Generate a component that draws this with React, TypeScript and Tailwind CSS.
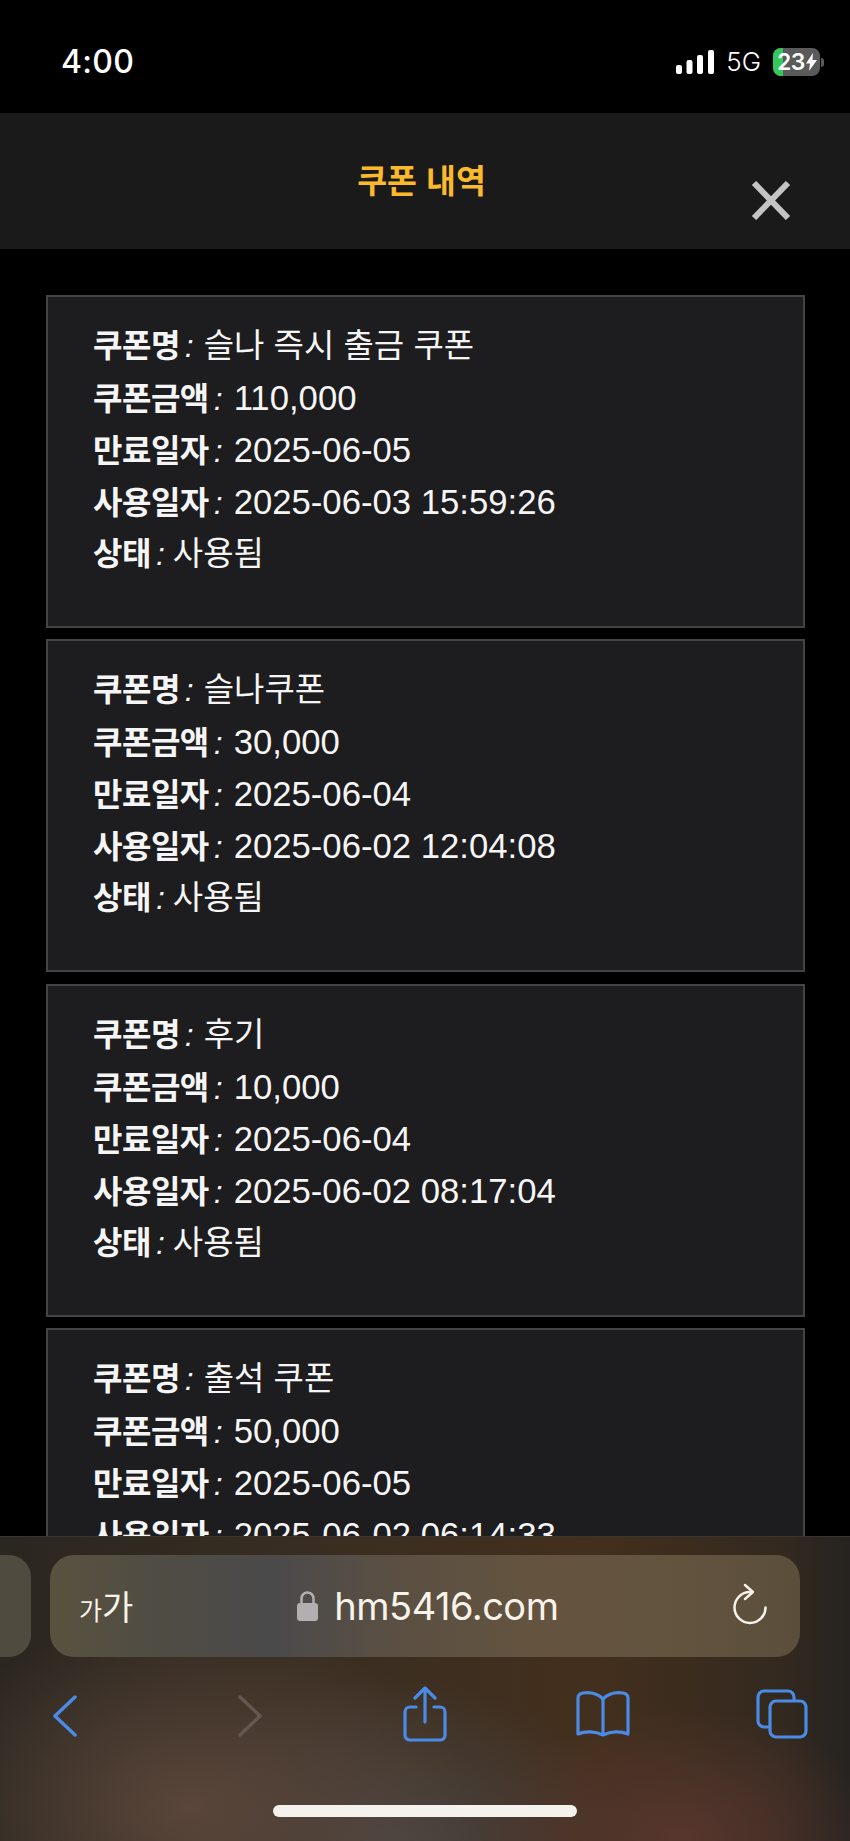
import React from 'react';

const coupons = [
  { name: '슬나 즉시 출금 쿠폰', amount: '110,000', expires: '2025-06-05', used: '2025-06-03 15:59:26' },
  { name: '슬나쿠폰', amount: '30,000', expires: '2025-06-04', used: '2025-06-02 12:04:08' },
  { name: '후기', amount: '10,000', expires: '2025-06-04', used: '2025-06-02 08:17:04' },
  { name: '출석 쿠폰', amount: '50,000', expires: '2025-06-05', used: '2025-06-02 06:14:33' },
];

function Row({ label, value, numeric, valueGap }: { label: string; value: string; numeric?: boolean; valueGap?: string }) {
  return (
    <div className="h-[52px] leading-[52px] whitespace-nowrap">
      <span className="font-bold tracking-[-0.5px]">{label}</span>
      <span className="italic ml-[5px] mr-[3px]">:</span>
      {numeric ? (
        <span className="text-[34.7px] ml-[8px]">{value}</span>
      ) : (
        <span className={`text-[33px] ${valueGap ?? 'ml-[7px]'}`}>{value}</span>
      )}
    </div>
  );
}

function StatusBar() {
  return (
    <div className="h-[113px] shrink-0 bg-black flex items-center justify-between pl-[61px] pr-[26px] pt-[11px] text-white font-['Inter',sans-serif]">
      <span className="text-[32px] font-medium leading-none tracking-[0.3px]">4:00</span>
      <div className="flex items-center">
        <svg width="38" height="24" viewBox="0 0 38 24" fill="white">
          <rect x="0" y="15" width="6" height="9" rx="2" />
          <rect x="10.5" y="10" width="6" height="14" rx="2" />
          <rect x="21" y="5" width="6" height="19" rx="2" />
          <rect x="32" y="0" width="6" height="24" rx="2" />
        </svg>
        <span className="ml-[12px] text-[26px] leading-none font-light">5G</span>
        <div className="ml-[12px] relative w-[47px] h-[28px] rounded-[8px] bg-[#5a5a5a] overflow-hidden flex items-center justify-center">
          <div className="absolute left-0 top-0 bottom-0 w-[10px] bg-[#34c759]" />
          <span className="relative text-[23px] font-semibold leading-none tracking-[-0.5px] mr-[11px]">23</span>
          <svg className="absolute right-[3px] top-[5px]" width="11" height="18" viewBox="0 0 11 18" fill="white">
            <path d="M7 0 0 10.500h4L3 18l8-11H6.500z" />
          </svg>
        </div>
        <div className="ml-[1px] w-[3px] h-[9px] rounded-r-full bg-[#5a5a5a]" />
      </div>
    </div>
  );
}

function Header() {
  return (
    <div className="h-[136px] shrink-0 bg-[#1a1a1a] relative flex justify-center pt-[46px]">
      <h1 className="text-[32.5px] leading-[46px] font-semibold text-[#fbb92c] ml-[-7px]">쿠폰 내역</h1>
      <svg className="absolute right-[59px] top-[68px]" width="40" height="39" viewBox="0 0 40 39">
        <path d="M3 2 37 37M37 2 3 37" stroke="#c4c4c4" strokeWidth="6" />
      </svg>
    </div>
  );
}

function CouponCard({ name, amount, expires, used }: (typeof coupons)[number]) {
  return (
    <div className="h-[333px] shrink-0 border-2 border-[#444446] bg-[#1d1c1e] pt-[23px] pl-[45px] text-[32px] text-[#f5f5f5]">
      <Row label="쿠폰명" value={name} />
      <Row label="쿠폰금액" value={amount} numeric />
      <Row label="만료일자" value={expires} numeric />
      <Row label="사용일자" value={used} numeric />
      <Row label="상태" value="사용됨" valueGap="ml-[5px]" />
    </div>
  );
}

function Toolbar() {
  return (
    <div className="h-[305px] shrink-0 border-t border-[#3a352e] flex flex-col bg-[radial-gradient(ellipse_280px_190px_at_190px_270px,#5a463a_0%,transparent_100%),radial-gradient(ellipse_200px_130px_at_680px_300px,#57362e_0%,transparent_100%),radial-gradient(ellipse_240px_170px_at_390px_310px,#4c4644_0%,transparent_100%),linear-gradient(90deg,#2a2620_0%,#3a2e21_40%,#432f1d_70%,#33291f_92%,#262320_100%)]">
      <div className="flex pt-[18px] h-[121px] shrink-0">
        <div className="w-[31px] h-[102px] rounded-r-[22px] bg-[#4f4c3f]" />
        <div className="ml-[19px] w-[750px] h-[102px] rounded-[24px] flex items-center relative bg-[linear-gradient(90deg,#58523f_0%,#4f4c44_15%,#4b4a4b_30%,#5a4f43_45%,#64543f_65%,#62533f_85%,#5a4e3b_100%)]">
          <span className="ml-[29px] flex items-baseline text-[#f7f3ea] font-['Noto_Sans_CJK_KR',sans-serif] leading-none">
            <span className="text-[25px]">가</span>
            <span className="text-[34px]">가</span>
          </span>
          <svg className="ml-[164px]" width="21" height="30" viewBox="0 0 21 30" fill="none">
            <path d="M4.500 13V7.500a6 6 0 0 1 12 0V13" stroke="#b3afb0" strokeWidth="2.500" />
            <rect x="0" y="12" width="21" height="18" rx="3" fill="#b3afb0" />
          </svg>
          <span className="ml-[16px] text-[38px] leading-none text-[#f7f3ea] font-['Inter',sans-serif] tracking-[-0.5px]">hm5416.com</span>
          <svg className="absolute right-[32px] top-[28px]" width="36" height="42" viewBox="0 0 36 42" fill="none" stroke="#f7f3ea" strokeWidth="2.500" strokeLinecap="round" strokeLinejoin="round">
            <path d="M18 9A15.500 15.500 0 1 0 33.500 24.500" />
            <path d="M13 2l8 7-8 7" />
          </svg>
        </div>
      </div>
      <div className="flex items-start pl-[53px] pt-[28px] h-[136px] shrink-0">
        <svg className="mt-[9px]" width="24" height="42" viewBox="0 0 24 42" fill="none" stroke="#4a8be6" strokeWidth="3.500" strokeLinecap="round" strokeLinejoin="round">
          <path d="M22 2 2 21l20 19" />
        </svg>
        <svg className="mt-[9px] ml-[161px]" width="24" height="42" viewBox="0 0 24 42" fill="none" stroke="#66564f" strokeWidth="3.500" strokeLinecap="round" strokeLinejoin="round">
          <path d="M2 2l20 19L2 40" />
        </svg>
        <svg className="ml-[141px]" width="44" height="56" viewBox="0 0 44 56" fill="none" stroke="#4a8be6" strokeWidth="3.200" strokeLinecap="round" strokeLinejoin="round">
          <path d="M13 21H7a5 5 0 0 0-5 5v23a5 5 0 0 0 5 5h30a5 5 0 0 0 5-5V26a5 5 0 0 0-5-5h-6" />
          <path d="M22 36V2M12 12 22 2l10 10" />
        </svg>
        <svg className="ml-[129px] mt-[5px]" width="54" height="46" viewBox="0 0 54 46" fill="none" stroke="#4a8be6" strokeWidth="3.200" strokeLinecap="round" strokeLinejoin="round">
          <path d="M27 8C22 3 14 1 7 2c-3 .5-5 2-5 5v36c7-3 17-3 25 1 8-4 18-4 25-1V7c0-3-2-4.500-5-5-7-1-15 1-20 6z" />
          <path d="M27 8v35" />
        </svg>
        <svg className="ml-[126px] mt-[3px]" width="52" height="50" viewBox="0 0 52 50" fill="none" stroke="#4a8be6" strokeWidth="3.200" strokeLinejoin="round">
          <path d="M13 38H8a6 6 0 0 1-6-6V8a6 6 0 0 1 6-6h24a6 6 0 0 1 6 6v4" />
          <rect x="14" y="12" width="36" height="36" rx="6" />
        </svg>
      </div>
      <div className="ml-[273px] mt-[11px] w-[304px] h-[12px] rounded-full bg-[#f5f2ee]" />
    </div>
  );
}

export default function App() {
  return (
    <div className="w-[850px] h-[1841px] overflow-hidden flex flex-col bg-black font-['Liberation_Sans','Noto_Sans_CJK_KR',sans-serif]">
      <StatusBar />
      <Header />
      <div className="flex-1 min-h-0 overflow-hidden pl-[46px] pr-[45px] pt-[46px] flex flex-col gap-[11.4px]">
        {coupons.map((c) => (
          <CouponCard key={c.name} {...c} />
        ))}
      </div>
      <Toolbar />
    </div>
  );
}
